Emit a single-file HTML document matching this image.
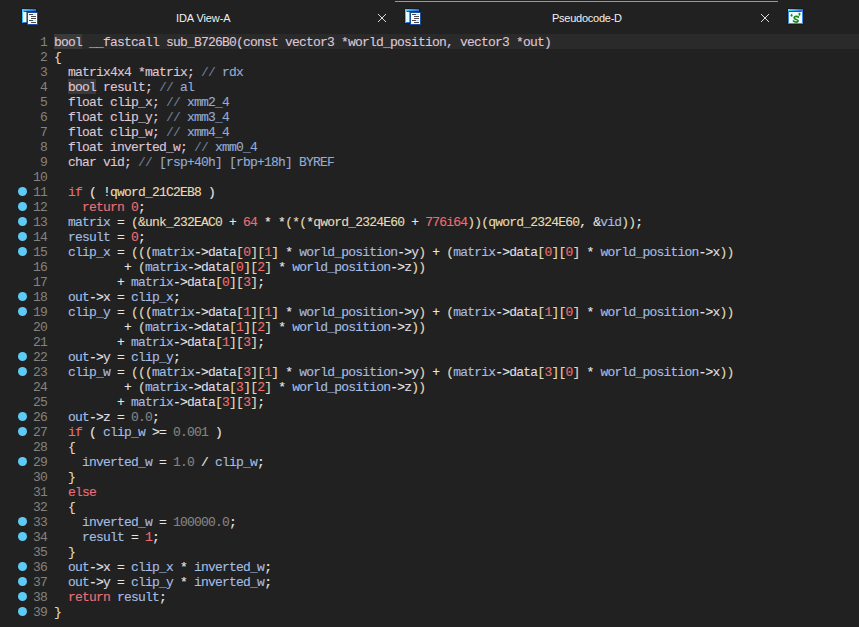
<!DOCTYPE html><html><head><meta charset="utf-8"><style>html,body{margin:0;padding:0;}
body{width:859px;height:627px;background:#212121;overflow:hidden;position:relative;}
#tabs{position:absolute;left:0;top:0;width:859px;height:34px;}
#active{position:absolute;left:395px;top:1px;width:383px;height:1px;background:#ec727b;}
.ic{position:absolute;}
.ic svg{display:block;}
.x{position:absolute;width:8px;height:8px;}
.x svg{display:block;}
.title{position:absolute;top:10px;height:16px;line-height:16px;white-space:nowrap;font-family:"Liberation Sans",sans-serif;font-size:11px;color:#f0f0f0;letter-spacing:-0.1px;}
#code{position:absolute;left:0;top:0;}
.ln{position:absolute;left:0;width:859px;height:15px;font-family:"Liberation Mono",monospace;font-size:13px;line-height:15px;white-space:pre;letter-spacing:-0.8px;-webkit-text-stroke:0.12px currentColor;}
.band{position:absolute;left:54px;top:0;width:805px;height:15px;background:#2a2a2a;}
.dot{position:absolute;left:18px;top:3px;width:9px;height:9px;border-radius:50%;background:#5ecbf7;}
.num{position:absolute;left:33px;top:1px;width:14px;text-align:right;color:#84847e;-webkit-text-stroke:0;}
.src{position:absolute;left:54px;top:1px;}
.d{color:#dec6d6;}
.c{color:#6f7e96;}
.cr{color:#93acd6;}
.k{color:#e8707a;}
.o{color:#e6e6e6;}
.p{color:#e2dab8;}
.g{color:#e6dcb4;}
.n{color:#ee6e70;}
.fl{color:#848484;}
.v{color:#a3bde3;}
.f{color:#dcdce4;}
.hlb{position:absolute;top:0;height:15px;background:#3a3a3a;}
</style></head><body>
<div id="tabs">
<div class="ic" style="left:20px;top:7px"><svg width="18" height="18" viewBox="0 0 18 18" shape-rendering="crispEdges"><defs><linearGradient id="gb" x1="0" y1="0" x2="1" y2="0.3"><stop offset="0" stop-color="#4fd6ff"/><stop offset="0.5" stop-color="#2f9cf0"/><stop offset="1" stop-color="#2d5fe0"/></linearGradient></defs><rect x="1" y="1" width="16" height="16" fill="#141414" opacity="0.5"/><rect x="2" y="2" width="14" height="14" fill="url(#gb)"/><rect x="4" y="4" width="11" height="1" fill="#2448d8"/><rect x="14" y="4" width="1" height="1" fill="#3a2ad0"/><rect x="3" y="5" width="4" height="10" fill="#e6fbff"/><rect x="3" y="15" width="4" height="1" fill="#3078e0"/><rect x="6" y="4" width="12" height="14" fill="#141414" opacity="0.45"/><rect x="7" y="5" width="11" height="13" fill="#1b4f98"/><rect x="8" y="6" width="9" height="11" fill="#f6faff"/><rect x="9" y="7" width="4" height="1" fill="#4a4a4a"/><rect x="13" y="7" width="3" height="1" fill="#c8d8e8"/><rect x="11" y="9" width="5" height="1" fill="#4a4a4a"/><rect x="11" y="11" width="5" height="1" fill="#4a4a4a"/><rect x="9" y="13" width="4" height="1" fill="#4a4a4a"/><rect x="13" y="13" width="3" height="1" fill="#c8d8e8"/><rect x="11" y="15" width="5" height="1" fill="#4a4a4a"/></svg>
</div>
<div class="title" style="left:176px">IDA View-A</div>
<div class="x" style="left:378px;top:14px"><svg width="8" height="8" viewBox="0 0 8 8" shape-rendering="crispEdges" fill="#dcdcdc"><rect x="0" y="0" width="1" height="1"/><rect x="7" y="0" width="1" height="1"/><rect x="1" y="1" width="1" height="1"/><rect x="6" y="1" width="1" height="1"/><rect x="2" y="2" width="1" height="1"/><rect x="5" y="2" width="1" height="1"/><rect x="3" y="3" width="1" height="1"/><rect x="4" y="3" width="1" height="1"/><rect x="4" y="4" width="1" height="1"/><rect x="3" y="4" width="1" height="1"/><rect x="5" y="5" width="1" height="1"/><rect x="2" y="5" width="1" height="1"/><rect x="6" y="6" width="1" height="1"/><rect x="1" y="6" width="1" height="1"/><rect x="7" y="7" width="1" height="1"/><rect x="0" y="7" width="1" height="1"/></svg></div>
<div id="active"></div>
<div class="ic" style="left:403px;top:7px"><svg width="18" height="18" viewBox="0 0 18 18" shape-rendering="crispEdges"><defs><linearGradient id="gb2" x1="0" y1="0" x2="1" y2="0.3"><stop offset="0" stop-color="#4fd6ff"/><stop offset="0.5" stop-color="#2f9cf0"/><stop offset="1" stop-color="#2d5fe0"/></linearGradient></defs><rect x="1" y="1" width="16" height="16" fill="#141414" opacity="0.5"/><rect x="2" y="2" width="14" height="14" fill="url(#gb2)"/><rect x="4" y="4" width="11" height="1" fill="#2448d8"/><rect x="14" y="4" width="1" height="1" fill="#3a2ad0"/><rect x="3" y="5" width="4" height="10" fill="#e6fbff"/><rect x="3" y="15" width="4" height="1" fill="#3078e0"/><rect x="6" y="4" width="12" height="14" fill="#141414" opacity="0.45"/><rect x="7" y="5" width="11" height="13" fill="#1b4f98"/><rect x="8" y="6" width="9" height="11" fill="#f6faff"/><rect x="9" y="7" width="4" height="1" fill="#4a4a4a"/><rect x="13" y="7" width="3" height="1" fill="#c8d8e8"/><rect x="11" y="9" width="5" height="1" fill="#4a4a4a"/><rect x="11" y="11" width="5" height="1" fill="#4a4a4a"/><rect x="9" y="13" width="4" height="1" fill="#4a4a4a"/><rect x="13" y="13" width="3" height="1" fill="#c8d8e8"/><rect x="11" y="15" width="5" height="1" fill="#4a4a4a"/></svg>
</div>
<div class="title" style="left:552px;letter-spacing:-0.25px">Pseudocode-D</div>
<div class="x" style="left:761px;top:14px"><svg width="8" height="8" viewBox="0 0 8 8" shape-rendering="crispEdges" fill="#dcdcdc"><rect x="0" y="0" width="1" height="1"/><rect x="7" y="0" width="1" height="1"/><rect x="1" y="1" width="1" height="1"/><rect x="6" y="1" width="1" height="1"/><rect x="2" y="2" width="1" height="1"/><rect x="5" y="2" width="1" height="1"/><rect x="3" y="3" width="1" height="1"/><rect x="4" y="3" width="1" height="1"/><rect x="4" y="4" width="1" height="1"/><rect x="3" y="4" width="1" height="1"/><rect x="5" y="5" width="1" height="1"/><rect x="2" y="5" width="1" height="1"/><rect x="6" y="6" width="1" height="1"/><rect x="1" y="6" width="1" height="1"/><rect x="7" y="7" width="1" height="1"/><rect x="0" y="7" width="1" height="1"/></svg></div>
<div class="ic" style="left:787px;top:8px"><svg width="17" height="17" viewBox="0 0 17 17"><defs><linearGradient id="gs" x1="0" y1="0" x2="1" y2="0"><stop offset="0" stop-color="#55dcff"/><stop offset="0.5" stop-color="#35a8f2"/><stop offset="1" stop-color="#2d62e0"/></linearGradient></defs><rect x="0" y="0" width="17" height="17" fill="#141414" opacity="0.5" shape-rendering="crispEdges"/><rect x="1" y="1" width="15" height="15" fill="#3a88e6" shape-rendering="crispEdges"/><rect x="1" y="1" width="15" height="2" fill="url(#gs)" shape-rendering="crispEdges"/><rect x="2" y="3" width="12" height="1" fill="#2448d8" shape-rendering="crispEdges"/><rect x="2" y="4" width="13" height="11" fill="#f0fcff" shape-rendering="crispEdges"/><path d="M11.2 9.2 C10.6 8.2 7.2 8 7.1 9.9 C7 11.6 11 11.3 11.1 12.8 C11.1 14.6 7.6 14.4 6.6 13.1" fill="none" stroke="#1d861d" stroke-width="1.7"/><path d="M11.6 8.2 L11.6 10" stroke="#1d861d" stroke-width="1"/><path d="M6.3 12 L6.3 14" stroke="#1d861d" stroke-width="1"/><circle cx="4.6" cy="7.6" r="1.05" fill="#1d861d"/><path d="M3.6 7.6 Q3.6 5.8 5.3 5.4 L5.3 6.1 Q4.6 6.4 4.6 7.2Z" fill="#1d861d"/><circle cx="12.4" cy="5.9" r="1.05" fill="#1d861d"/><path d="M13.4 5.9 Q13.4 7.8 11.7 8.2 L11.7 7.5 Q12.4 7.2 12.4 6.4Z" fill="#1d861d"/></svg>
</div>
</div>
<div id="code">
<div class="ln" style="top:34px"><i class="band"></i><i class="hlb" style="left:54px;width:28px"></i><span class="num">1</span><span class="src"><span class="d">bool</span><span class="d"> __fastcall sub_B726B0(const vector3 *world_position, vector3 *out)</span></span></div>
<div class="ln" style="top:49px"><span class="num">2</span><span class="src"><span class="p">{</span></span></div>
<div class="ln" style="top:64px"><span class="num">3</span><span class="src"><span class="d">  matrix4x4 *matrix; </span><span class="c">// </span><span class="cr">rdx</span></span></div>
<div class="ln" style="top:79px"><i class="hlb" style="left:68px;width:28px"></i><span class="num">4</span><span class="src"><span class="d">  </span><span class="d">bool</span><span class="d"> result; </span><span class="c">// </span><span class="cr">al</span></span></div>
<div class="ln" style="top:94px"><span class="num">5</span><span class="src"><span class="d">  float clip_x; </span><span class="c">// </span><span class="cr">xmm2_4</span></span></div>
<div class="ln" style="top:109px"><span class="num">6</span><span class="src"><span class="d">  float clip_y; </span><span class="c">// </span><span class="cr">xmm3_4</span></span></div>
<div class="ln" style="top:124px"><span class="num">7</span><span class="src"><span class="d">  float clip_w; </span><span class="c">// </span><span class="cr">xmm4_4</span></span></div>
<div class="ln" style="top:139px"><span class="num">8</span><span class="src"><span class="d">  float inverted_w; </span><span class="c">// </span><span class="cr">xmm0_4</span></span></div>
<div class="ln" style="top:154px"><span class="num">9</span><span class="src"><span class="d">  char vid; </span><span class="c">// </span><span class="cr">[rsp+40h] [rbp+18h] BYREF</span></span></div>
<div class="ln" style="top:169px"><span class="num">10</span><span class="src"></span></div>
<div class="ln" style="top:184px"><i class="dot"></i><span class="num">11</span><span class="src"><span class="d">  </span><span class="k">if</span><span class="o"> ( !</span><span class="g">qword_21C2EB8</span><span class="o"> )</span></span></div>
<div class="ln" style="top:199px"><i class="dot"></i><span class="num">12</span><span class="src"><span class="d">    </span><span class="k">return</span><span class="o"> </span><span class="n">0</span><span class="o">;</span></span></div>
<div class="ln" style="top:214px"><i class="dot"></i><span class="num">13</span><span class="src"><span class="d">  </span><span class="v">matrix</span><span class="o"> = </span><span class="p">(</span><span class="g">&amp;unk_232EAC0</span><span class="o"> + </span><span class="n">64</span><span class="o"> * *</span><span class="p">(*(</span><span class="o">*</span><span class="g">qword_2324E60</span><span class="o"> + </span><span class="n">776i64</span><span class="p">))(</span><span class="g">qword_2324E60</span><span class="o">, </span><span class="o">&amp;</span><span class="v">vid</span><span class="p">))</span><span class="o">;</span></span></div>
<div class="ln" style="top:229px"><i class="dot"></i><span class="num">14</span><span class="src"><span class="d">  </span><span class="v">result</span><span class="o"> = </span><span class="n">0</span><span class="o">;</span></span></div>
<div class="ln" style="top:244px"><i class="dot"></i><span class="num">15</span><span class="src"><span class="d">  </span><span class="v">clip_x</span><span class="o"> = </span><span class="p">(((</span><span class="v">matrix</span><span class="o">-&gt;</span><span class="f">data</span><span class="p">[</span><span class="n">0</span><span class="p">][</span><span class="n">1</span><span class="p">]</span><span class="o"> * </span><span class="v">world_position</span><span class="o">-&gt;</span><span class="f">y</span><span class="p">)</span><span class="o"> + </span><span class="p">(</span><span class="v">matrix</span><span class="o">-&gt;</span><span class="f">data</span><span class="p">[</span><span class="n">0</span><span class="p">][</span><span class="n">0</span><span class="p">]</span><span class="o"> * </span><span class="v">world_position</span><span class="o">-&gt;</span><span class="f">x</span><span class="p">))</span></span></div>
<div class="ln" style="top:259px"><span class="num">16</span><span class="src"><span class="d">          </span><span class="o">+ </span><span class="p">(</span><span class="v">matrix</span><span class="o">-&gt;</span><span class="f">data</span><span class="p">[</span><span class="n">0</span><span class="p">][</span><span class="n">2</span><span class="p">]</span><span class="o"> * </span><span class="v">world_position</span><span class="o">-&gt;</span><span class="f">z</span><span class="p">))</span></span></div>
<div class="ln" style="top:274px"><span class="num">17</span><span class="src"><span class="d">         </span><span class="o">+ </span><span class="v">matrix</span><span class="o">-&gt;</span><span class="f">data</span><span class="p">[</span><span class="n">0</span><span class="p">][</span><span class="n">3</span><span class="p">]</span><span class="o">;</span></span></div>
<div class="ln" style="top:289px"><i class="dot"></i><span class="num">18</span><span class="src"><span class="d">  </span><span class="v">out</span><span class="o">-&gt;</span><span class="f">x</span><span class="o"> = </span><span class="v">clip_x</span><span class="o">;</span></span></div>
<div class="ln" style="top:304px"><i class="dot"></i><span class="num">19</span><span class="src"><span class="d">  </span><span class="v">clip_y</span><span class="o"> = </span><span class="p">(((</span><span class="v">matrix</span><span class="o">-&gt;</span><span class="f">data</span><span class="p">[</span><span class="n">1</span><span class="p">][</span><span class="n">1</span><span class="p">]</span><span class="o"> * </span><span class="v">world_position</span><span class="o">-&gt;</span><span class="f">y</span><span class="p">)</span><span class="o"> + </span><span class="p">(</span><span class="v">matrix</span><span class="o">-&gt;</span><span class="f">data</span><span class="p">[</span><span class="n">1</span><span class="p">][</span><span class="n">0</span><span class="p">]</span><span class="o"> * </span><span class="v">world_position</span><span class="o">-&gt;</span><span class="f">x</span><span class="p">))</span></span></div>
<div class="ln" style="top:319px"><span class="num">20</span><span class="src"><span class="d">          </span><span class="o">+ </span><span class="p">(</span><span class="v">matrix</span><span class="o">-&gt;</span><span class="f">data</span><span class="p">[</span><span class="n">1</span><span class="p">][</span><span class="n">2</span><span class="p">]</span><span class="o"> * </span><span class="v">world_position</span><span class="o">-&gt;</span><span class="f">z</span><span class="p">))</span></span></div>
<div class="ln" style="top:334px"><span class="num">21</span><span class="src"><span class="d">         </span><span class="o">+ </span><span class="v">matrix</span><span class="o">-&gt;</span><span class="f">data</span><span class="p">[</span><span class="n">1</span><span class="p">][</span><span class="n">3</span><span class="p">]</span><span class="o">;</span></span></div>
<div class="ln" style="top:349px"><i class="dot"></i><span class="num">22</span><span class="src"><span class="d">  </span><span class="v">out</span><span class="o">-&gt;</span><span class="f">y</span><span class="o"> = </span><span class="v">clip_y</span><span class="o">;</span></span></div>
<div class="ln" style="top:364px"><i class="dot"></i><span class="num">23</span><span class="src"><span class="d">  </span><span class="v">clip_w</span><span class="o"> = </span><span class="p">(((</span><span class="v">matrix</span><span class="o">-&gt;</span><span class="f">data</span><span class="p">[</span><span class="n">3</span><span class="p">][</span><span class="n">1</span><span class="p">]</span><span class="o"> * </span><span class="v">world_position</span><span class="o">-&gt;</span><span class="f">y</span><span class="p">)</span><span class="o"> + </span><span class="p">(</span><span class="v">matrix</span><span class="o">-&gt;</span><span class="f">data</span><span class="p">[</span><span class="n">3</span><span class="p">][</span><span class="n">0</span><span class="p">]</span><span class="o"> * </span><span class="v">world_position</span><span class="o">-&gt;</span><span class="f">x</span><span class="p">))</span></span></div>
<div class="ln" style="top:379px"><span class="num">24</span><span class="src"><span class="d">          </span><span class="o">+ </span><span class="p">(</span><span class="v">matrix</span><span class="o">-&gt;</span><span class="f">data</span><span class="p">[</span><span class="n">3</span><span class="p">][</span><span class="n">2</span><span class="p">]</span><span class="o"> * </span><span class="v">world_position</span><span class="o">-&gt;</span><span class="f">z</span><span class="p">))</span></span></div>
<div class="ln" style="top:394px"><span class="num">25</span><span class="src"><span class="d">         </span><span class="o">+ </span><span class="v">matrix</span><span class="o">-&gt;</span><span class="f">data</span><span class="p">[</span><span class="n">3</span><span class="p">][</span><span class="n">3</span><span class="p">]</span><span class="o">;</span></span></div>
<div class="ln" style="top:409px"><i class="dot"></i><span class="num">26</span><span class="src"><span class="d">  </span><span class="v">out</span><span class="o">-&gt;</span><span class="f">z</span><span class="o"> = </span><span class="fl">0.0</span><span class="o">;</span></span></div>
<div class="ln" style="top:424px"><i class="dot"></i><span class="num">27</span><span class="src"><span class="d">  </span><span class="k">if</span><span class="o"> ( </span><span class="v">clip_w</span><span class="o"> &gt;= </span><span class="fl">0.001</span><span class="o"> )</span></span></div>
<div class="ln" style="top:439px"><span class="num">28</span><span class="src"><span class="d">  </span><span class="p">{</span></span></div>
<div class="ln" style="top:454px"><i class="dot"></i><span class="num">29</span><span class="src"><span class="d">    </span><span class="v">inverted_w</span><span class="o"> = </span><span class="fl">1.0</span><span class="o"> / </span><span class="v">clip_w</span><span class="o">;</span></span></div>
<div class="ln" style="top:469px"><span class="num">30</span><span class="src"><span class="d">  </span><span class="p">}</span></span></div>
<div class="ln" style="top:484px"><span class="num">31</span><span class="src"><span class="d">  </span><span class="k">else</span></span></div>
<div class="ln" style="top:499px"><span class="num">32</span><span class="src"><span class="d">  </span><span class="p">{</span></span></div>
<div class="ln" style="top:514px"><i class="dot"></i><span class="num">33</span><span class="src"><span class="d">    </span><span class="v">inverted_w</span><span class="o"> = </span><span class="fl">100000.0</span><span class="o">;</span></span></div>
<div class="ln" style="top:529px"><i class="dot"></i><span class="num">34</span><span class="src"><span class="d">    </span><span class="v">result</span><span class="o"> = </span><span class="n">1</span><span class="o">;</span></span></div>
<div class="ln" style="top:544px"><span class="num">35</span><span class="src"><span class="d">  </span><span class="p">}</span></span></div>
<div class="ln" style="top:559px"><i class="dot"></i><span class="num">36</span><span class="src"><span class="d">  </span><span class="v">out</span><span class="o">-&gt;</span><span class="f">x</span><span class="o"> = </span><span class="v">clip_x</span><span class="o"> * </span><span class="v">inverted_w</span><span class="o">;</span></span></div>
<div class="ln" style="top:574px"><i class="dot"></i><span class="num">37</span><span class="src"><span class="d">  </span><span class="v">out</span><span class="o">-&gt;</span><span class="f">y</span><span class="o"> = </span><span class="v">clip_y</span><span class="o"> * </span><span class="v">inverted_w</span><span class="o">;</span></span></div>
<div class="ln" style="top:589px"><i class="dot"></i><span class="num">38</span><span class="src"><span class="d">  </span><span class="k">return</span><span class="o"> </span><span class="v">result</span><span class="o">;</span></span></div>
<div class="ln" style="top:604px"><i class="dot"></i><span class="num">39</span><span class="src"><span class="p">}</span></span></div>
</div></body></html>
